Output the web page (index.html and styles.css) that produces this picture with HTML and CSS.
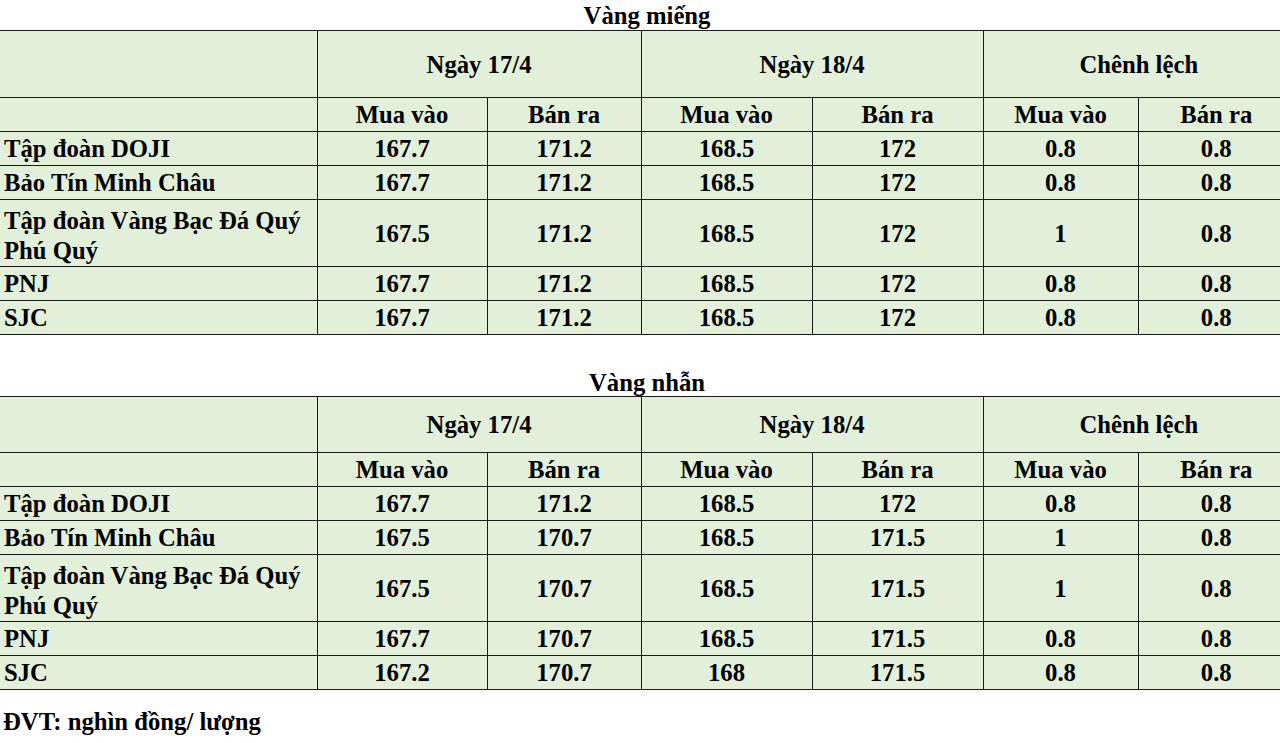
FILE: index.html
```html
<!DOCTYPE html>
<html lang="vi">
<head>
<meta charset="utf-8">
<title>Giá vàng</title>
<link rel="stylesheet" href="styles.css">
</head>
<body>
<p class="title">Vàng miếng</p>
<table class="gold">
  <colgroup>
    <col class="c-name"><col class="c1"><col class="c2"><col class="c3"><col class="c4"><col class="c5"><col class="c6">
  </colgroup>
  <tr class="r-head1 tall">
    <td class="name"></td>
    <td colspan="2">Ngày 17/4</td>
    <td colspan="2">Ngày 18/4</td>
    <td colspan="2" class="last">Chênh lệch</td>
  </tr>
  <tr class="r-row">
    <td class="name"></td>
    <td>Mua vào</td><td>Bán ra</td><td>Mua vào</td><td>Bán ra</td><td>Mua vào</td><td class="last">Bán ra</td>
  </tr>
  <tr class="r-row">
    <td class="name">Tập đoàn DOJI</td>
    <td>167.7</td><td>171.2</td><td>168.5</td><td>172</td><td>0.8</td><td class="last">0.8</td>
  </tr>
  <tr class="r-row">
    <td class="name">Bảo Tín Minh Châu</td>
    <td>167.7</td><td>171.2</td><td>168.5</td><td>172</td><td>0.8</td><td class="last">0.8</td>
  </tr>
  <tr class="r-double">
    <td class="name two">Tập đoàn Vàng Bạc Đá Quý<br>Phú Quý</td>
    <td>167.5</td><td>171.2</td><td>168.5</td><td>172</td><td>1</td><td class="last">0.8</td>
  </tr>
  <tr class="r-row">
    <td class="name">PNJ</td>
    <td>167.7</td><td>171.2</td><td>168.5</td><td>172</td><td>0.8</td><td class="last">0.8</td>
  </tr>
  <tr class="r-row">
    <td class="name">SJC</td>
    <td>167.7</td><td>171.2</td><td>168.5</td><td>172</td><td>0.8</td><td class="last">0.8</td>
  </tr>
</table>

<p class="title second">Vàng nhẫn</p>
<table class="gold">
  <colgroup>
    <col class="c-name"><col class="c1"><col class="c2"><col class="c3"><col class="c4"><col class="c5"><col class="c6">
  </colgroup>
  <tr class="r-head1 mid">
    <td class="name"></td>
    <td colspan="2">Ngày 17/4</td>
    <td colspan="2">Ngày 18/4</td>
    <td colspan="2" class="last">Chênh lệch</td>
  </tr>
  <tr class="r-row">
    <td class="name"></td>
    <td>Mua vào</td><td>Bán ra</td><td>Mua vào</td><td>Bán ra</td><td>Mua vào</td><td class="last">Bán ra</td>
  </tr>
  <tr class="r-row">
    <td class="name">Tập đoàn DOJI</td>
    <td>167.7</td><td>171.2</td><td>168.5</td><td>172</td><td>0.8</td><td class="last">0.8</td>
  </tr>
  <tr class="r-row">
    <td class="name">Bảo Tín Minh Châu</td>
    <td>167.5</td><td>170.7</td><td>168.5</td><td>171.5</td><td>1</td><td class="last">0.8</td>
  </tr>
  <tr class="r-double">
    <td class="name two">Tập đoàn Vàng Bạc Đá Quý<br>Phú Quý</td>
    <td>167.5</td><td>170.7</td><td>168.5</td><td>171.5</td><td>1</td><td class="last">0.8</td>
  </tr>
  <tr class="r-row">
    <td class="name">PNJ</td>
    <td>167.7</td><td>170.7</td><td>168.5</td><td>171.5</td><td>0.8</td><td class="last">0.8</td>
  </tr>
  <tr class="r-row">
    <td class="name">SJC</td>
    <td>167.2</td><td>170.7</td><td>168</td><td>171.5</td><td>0.8</td><td class="last">0.8</td>
  </tr>
</table>

<p class="unit">ĐVT: nghìn đồng/ lượng</p>
</body>
</html>
```

FILE: styles.css
```css
html {
  overflow: hidden;
}

html, body {
  margin: 0;
  padding: 0;
  background: #ffffff;
}

body {
  width: 1294px;
  font-family: "Liberation Serif", "Times New Roman", serif;
  font-weight: 700;
  font-size: 24.7px;
  color: #000000;
}

.title {
  margin: 0;
  padding-top: 2px;
  height: 28px;
  line-height: 28px;
  text-align: center;
}

.title.second {
  margin-top: 31px;
  padding-top: 3px;
  height: 27px;
}

.gold {
  width: 1294px;
  table-layout: fixed;
  border-collapse: collapse;
  background: #e2efd9;
  font-size: 24.7px;
  font-weight: 700;
}

.c-name { width: 317px; }
.c1 { width: 170px; }
.c2 { width: 154px; }
.c3 { width: 171px; }
.c4 { width: 171px; }
.c5 { width: 155px; }
.c6 { width: 156px; }

.gold td {
  border: 1px solid #1a1a1a;
  padding: 1px 0 0 0;
  line-height: 30px;
  text-align: center;
  vertical-align: middle;
  white-space: nowrap;
}

.gold td.name {
  text-align: left;
  padding-left: 4px;
  border-left: none;
}

.gold td.last {
  border-right: none;
}

.gold td.two {
  padding-top: 6px;
}

.r-head1.tall { height: 67px; }
.r-head1.mid { height: 56px; }
.r-row { height: 34px; }
.r-double { height: 67px; }

.unit {
  margin: 18px 0 0 0;
  padding-left: 3px;
  line-height: 28px;
}
```
